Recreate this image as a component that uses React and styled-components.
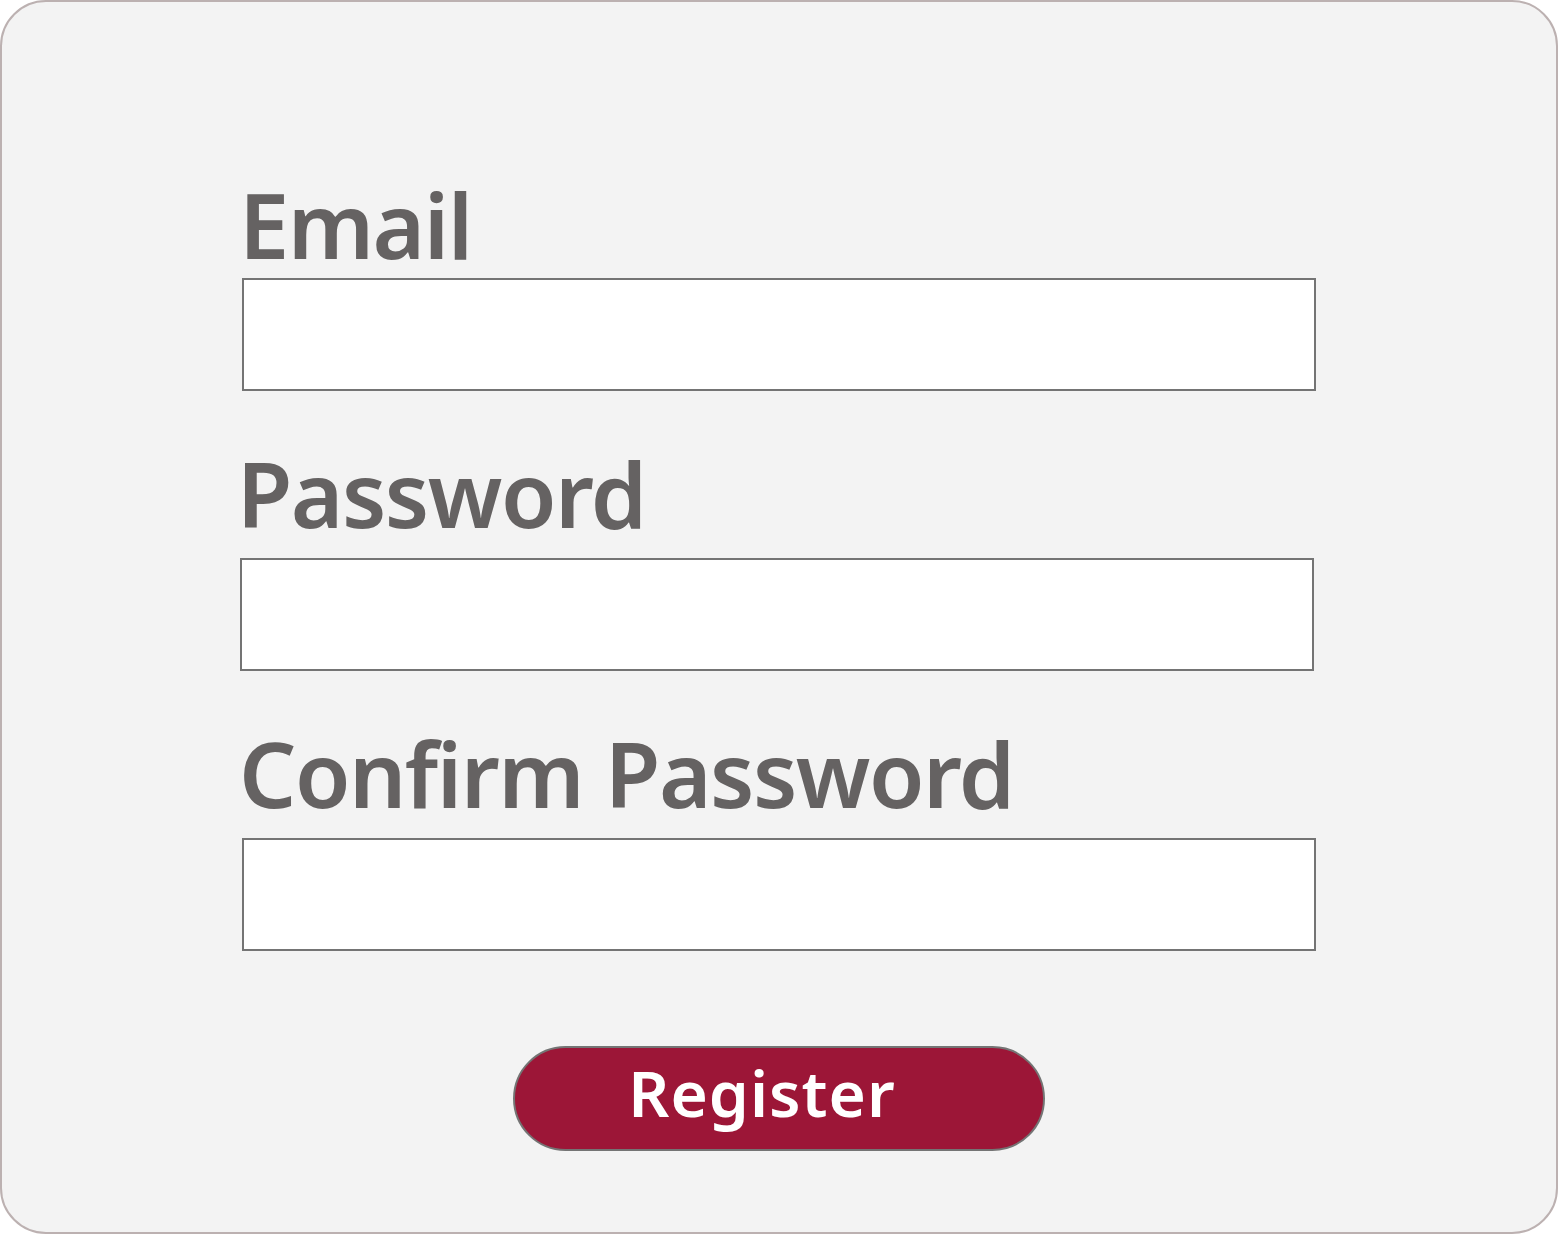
import React from "react";
import styled, { createGlobalStyle } from "styled-components";

const Global = createGlobalStyle`
  html, body { margin: 0; padding: 0; background: #ffffff; }
  body { font-family: "Noto Sans", "DejaVu Sans", sans-serif; }
  * { box-sizing: border-box; }
`;

const Card = styled.div`
  width: 1558px;
  height: 1234px;
  background: #f3f3f3;
  border: 2px solid #bcb1b1;
  border-radius: 46px;
  display: flex;
  flex-direction: column;
  padding: 177px 0 0 238px;
`;

const Field = styled.div`
  display: flex;
  flex-direction: column;
  align-items: flex-start;
  margin-top: ${(p) => p.$top || 0}px;
  margin-left: ${(p) => p.$shift || 0}px;
`;

const Label = styled.label`
  font-family: "Noto Sans", sans-serif;
  font-weight: 600;
  font-size: 90px;
  line-height: 90px;
  letter-spacing: -1.5px;
  color: #656262;
  margin-left: -3px;
  margin-bottom: ${(p) => p.$gap}px;
`;

const Input = styled.input`
  width: 1074px;
  height: 113px;
  background: #ffffff;
  border: 2px solid #747474;
  border-radius: 0;
  outline: none;
  padding: 0 20px;
  font-family: "Noto Sans", sans-serif;
  font-size: 40px;
`;

const Actions = styled.div`
  display: flex;
  justify-content: center;
  margin-left: -238px;
  margin-top: 95px;
`;

const Button = styled.button`
  width: 532px;
  height: 105px;
  background: #9c1637;
  border: 2px solid #747474;
  border-radius: 53px;
  color: #ffffff;
  font-family: "Noto Sans", sans-serif;
  font-weight: 600;
  font-size: 64px;
  letter-spacing: 1px;
  line-height: 1;
  padding: 0 34px 12px 0;
  cursor: pointer;
`;

export default function App() {
  return (
    <>
      <Global />
      <Card>
        <Field $shift={2}>
          <Label $gap={9}>Email</Label>
          <Input type="email" />
        </Field>
        <Field $top={57}>
          <Label $gap={20}>Password</Label>
          <Input type="password" />
        </Field>
        <Field $top={57} $shift={2}>
          <Label $gap={20}>Confirm Password</Label>
          <Input type="password" />
        </Field>
        <Actions>
          <Button type="button">Register</Button>
        </Actions>
      </Card>
    </>
  );
}
